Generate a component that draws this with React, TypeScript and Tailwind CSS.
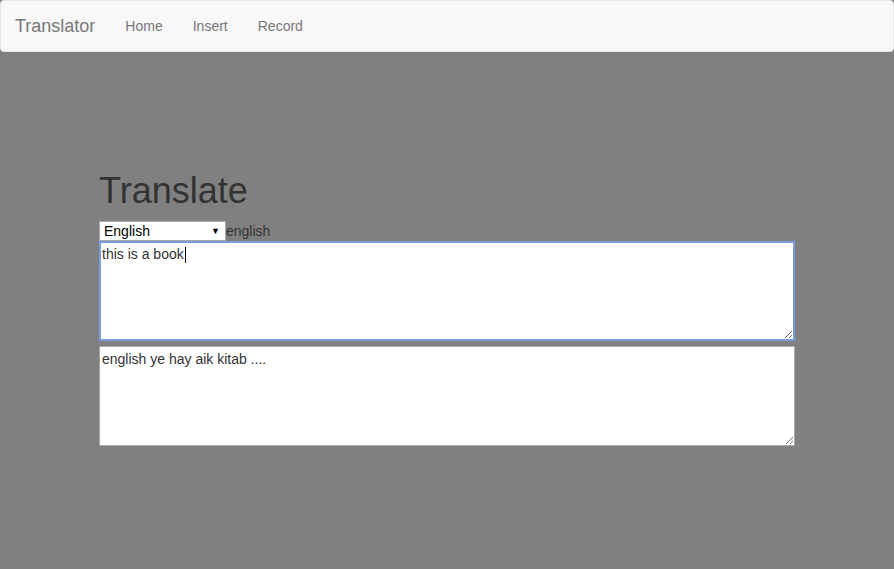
import React from "react";

export default function App() {
  return (
    <div
      className="min-h-screen w-full bg-[#808080] text-[#333]"
      style={{ fontFamily: '"Liberation Sans", Arial, sans-serif' }}
    >
      <nav className="h-[52px] bg-[#f8f8f8] border border-[#e7e7e7] rounded-[4px] flex items-center">
        <span className="pl-[14px] pr-[15px] text-[18px] text-[#777] leading-[20px]">Translator</span>
        <span className="px-[15px] text-[14px] text-[#777] leading-[20px]">Home</span>
        <span className="px-[15px] text-[14px] text-[#777] leading-[20px]">Insert</span>
        <span className="px-[15px] text-[14px] text-[#777] leading-[20px]">Record</span>
      </nav>
      <div className="pl-[99px] pt-[119px] w-[795px]">
        <h1 className="text-[36px] leading-[40px] text-[#333] font-normal mb-[10px]">Translate</h1>
        <div className="flex items-center h-[20px] text-[14px]">
          <div className="w-[127px] h-[20px] bg-white border border-[#a9a9a9] flex items-center justify-between pl-[4px] pr-[5px] text-[14px] text-black">
            <span>English</span>
            <span className="text-[9px] leading-none">▼</span>
          </div>
          <span className="text-[#333]">english</span>
        </div>
        <div className="relative">
          <textarea
            defaultValue="this is a book"
            className="block w-[696px] h-[100px] bg-white border-2 border-[#7b9edb] outline-none px-[1px] pt-[3px] text-[14px] leading-[16px] text-[#333] resize-y"
            style={{ fontFamily: '"Liberation Sans", Arial, sans-serif' }}
          />
          <span className="absolute left-[86px] top-[6px] w-px h-[16px] bg-black" />
        </div>
        <textarea
          readOnly
          defaultValue="english ye hay aik kitab ...."
          className="block mt-[5px] w-[696px] h-[100px] bg-white border border-[#a9a9a9] outline-none px-[2px] pt-[4px] text-[14px] leading-[16px] text-[#333] resize-y"
          style={{ fontFamily: '"Liberation Sans", Arial, sans-serif' }}
        />
      </div>
    </div>
  );
}
